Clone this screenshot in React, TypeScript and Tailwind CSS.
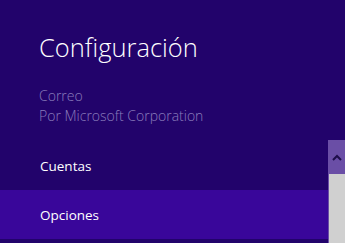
export default function App() {
	return (
		<div className="w-[345px] h-[243px] bg-[#22036b] flex overflow-hidden" style={{ fontFamily: '"Open Sans", "Noto Sans", sans-serif' }}>
			{/* Settings pane */}
			<div className="flex-1 flex flex-col">
				<h1 className="pl-[39px] pt-[31px] text-[25.5px] leading-[32px] font-light text-white">Configuración</h1>
				<div className="pl-[39px] pt-[23px] text-[14px] leading-[20px] font-light text-[#8a7cbb]">
					<div>Correo</div>
					<div>Por Microsoft Corporation</div>
				</div>
				<div className="mt-[15px] h-[49px] pl-[40px] pt-[2px] flex items-center text-[13.5px] text-white">Cuentas</div>
				<div className="h-[49px] pl-[40px] pt-[2px] flex items-center text-[13.5px] text-white bg-[#39069a]">Opciones</div>
			</div>
			{/* Scrollbar */}
			<div className="w-[17px] pt-[140px] flex flex-col">
				<div className="h-[34px] bg-[#6a4ea6] flex items-center justify-center">
					<svg width="10" height="7" viewBox="0 0 10 7">
						<path d="M1 6 L5 2 L9 6" fill="none" stroke="#1e0d4a" strokeWidth="2" />
					</svg>
				</div>
				<div className="flex-1 border-l border-[#6a4ea6] bg-[#d0d0d0]" />
			</div>
		</div>
	);
}
